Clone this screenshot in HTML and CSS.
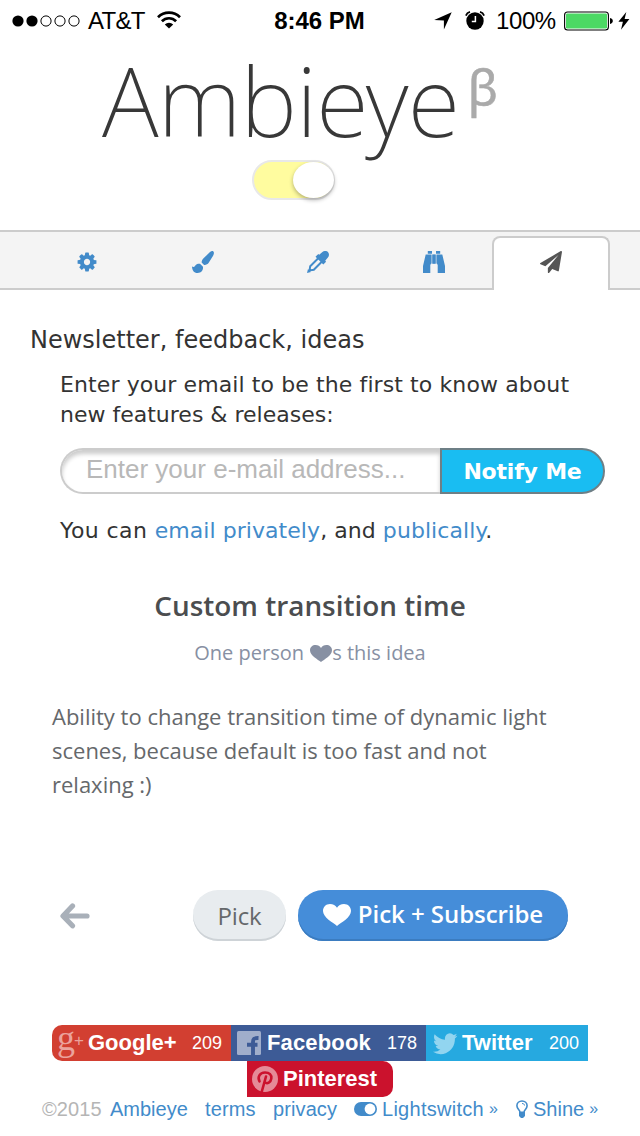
FILE: index.html
```html
<!DOCTYPE html>
<html lang="en">
<head>
<meta charset="utf-8">
<title>Ambieye</title>
<link rel="stylesheet" href="styles.css">
</head>
<body>
<div class="status">
  <div class="status-left">
    <svg class="dots" width="68" height="12" viewBox="0 0 68 12"><circle cx="6" cy="6" r="5.6"/><circle cx="20" cy="6" r="5.6"/><g fill="none" stroke="#000" stroke-width="1"><circle cx="34" cy="6" r="5.1"/><circle cx="48" cy="6" r="5.1"/><circle cx="62" cy="6" r="5.1"/></g></svg>
    <span class="carrier">AT&amp;T</span>
    <svg class="wifi" width="24" height="18" viewBox="0 0 24 18"><path d="M1 6.2a15.6 15.6 0 0 1 22 0M4.900 10.2a10 10 0 0 1 14.2 0" fill="none" stroke="#000" stroke-width="2.7"/><path d="M7.8 13.4a6 6 0 0 1 8.4 0L12 17.6z"/></svg>
  </div>
  <span class="clock">8:46 PM</span>
  <div class="status-right">
    <svg class="locate" width="18" height="18" viewBox="0 0 18 18"><path d="M17.7.2 9.9 17.6V8.4L.2 8.1z"/></svg>
    <svg class="alarm" width="20" height="19" viewBox="0 0 20 19"><circle cx="10" cy="10" r="8.7"/><path d="M.9 4.6A6 6 0 0 1 5 .9M15 .9a6 6 0 0 1 4.1 3.7" fill="none" stroke="#000" stroke-width="1.8"/><path d="M10.400 5v5.600H6.800" fill="none" stroke="#fff" stroke-width="1.5"/></svg>
    <span class="percent">100%</span>
    <svg class="battery" width="49" height="20" viewBox="0 0 49 20"><rect x=".6" y="1" width="43.8" height="18" rx="3" fill="#fff" stroke="#000" stroke-width="1.1"/><rect x="2" y="2.4" width="41" height="15.2" rx="1.4" fill="#4cd964"/><path d="M46 7c2 .4 2.800 1.600 2.800 3s-.8 2.600-2.800 3z"/></svg>
    <svg class="bolt" width="12" height="18" viewBox="0 0 12 18"><path d="M8.300 0 .4 9.800h4.500L3 17.800 11.400 7H6.600z"/></svg>
  </div>
</div>

<header class="header">
  <svg class="logo" width="640" height="119" viewBox="0 0 640 119">
    <text class="logo-name" x="102" y="96" textLength="358">Ambieye</text>
    <text class="logo-beta" x="467.500" y="65">β</text>
  </svg>
  <div class="switch"><span class="knob"></span></div>
</header>

<nav class="tabs">
  <a class="tab"><svg width="22" height="22" viewBox="0 0 1792 1792"><path d="M1152 896q0-106-75-181t-181-75-181 75-75 181 75 181 181 75 181-75 75-181zm512-109v222q0 12-8 23t-20 13l-185 28q-19 54-39 91 35 50 107 138 10 12 10 25t-9 23q-27 37-99 108t-94 71q-12 0-26-9l-138-108q-44 23-91 38-16 136-29 186-7 28-36 28h-222q-14 0-24.500-8.500t-11.500-21.500l-28-184q-49-16-90-37l-141 107q-10 9-25 9-14 0-25-11-126-114-165-168-7-10-7-23 0-12 8-23 15-21 51-66.500t54-70.500q-27-50-41-99l-183-27q-13-2-21-12.500t-8-23.500v-222q0-12 8-23t19-13l186-28q14-46 39-92-40-57-107-138-10-12-10-24 0-10 9-23 26-36 98.500-107.500t94.500-71.500q13 0 26 10l138 107q44-23 91-38 16-136 29-186 7-28 36-28h222q14 0 24.500 8.500t11.500 21.500l28 184q49 16 90 37l142-107q9-9 24-9 13 0 25 10 129 119 165 170 7 8 7 22 0 12-8 23-15 21-51 66.500t-54 70.500q26 50 41 98l183 28q13 2 21 12.500t8 23.500z"/></svg></a>
  <a class="tab"><svg width="22" height="22" viewBox="0 0 22 22"><path d="M21.400.5c.9.900.6 2.500-.3 4.200L16.700 11.800c-1.100 1.500-2.600 2.300-4.600 2.100L9.600 11.500c.1-1.900.8-3.100 2.200-4.500L18 1.100C19.400-.1 20.700-.2 21.400.5z"/><path d="M0 15.500c1.300.8 2.200.6 3-.5 1-1.700 2.500-2.300 5-2.200l3 3C11.400 19.500 9.200 22 5.600 22 1.800 22 .3 19.500 0 15.500z"/></svg></a>
  <a class="tab"><svg width="22" height="22" viewBox="0 0 22 22"><path d="M12.200 3.700 15.400 1c2-1.500 4.200-1.300 5.500 0 1.400 1.500 1.500 3.700 0 5.600L18.200 9.800l.9 1-2.800 2.800L8.500 5.700l2.800-2.800z"/><path d="M11.500 7 3.200 15.200 2.600 19.400l4.200-.6L15 10.500" fill="none" stroke="currentColor" stroke-width="2"/><path d="m0 22 1-4 3 3z"/></svg></a>
  <a class="tab"><svg width="22" height="22" viewBox="0 0 22 22"><path d="M4.800 0h4.200v2.800H4.800zM13 0h4.200v2.800H13zM2.700 3.600h5.400V12.500L7.300 14v8H0v-7zM19.300 3.600h-5.400V12.500l.8 1.500v8H22v-7zM9.500 3.600h3v9.200h-3z"/><path d="M8.100 3.600h5.800v9H8.100z" opacity=".6"/></svg></a>
  <a class="tab tab-active"><svg width="22" height="22" viewBox="0 0 1792 1792"><path d="M1764 11q33 24 27 64l-256 1536q-5 29-32 45-14 8-31 8-11 0-24-5l-453-185-242 295q-18 23-49 23-13 0-22-4-19-7-30.500-23.500t-11.500-36.500v-349l864-1059-1069 925-395-162q-37-14-40-55-2-40 32-59l1664-960q15-9 32-9 20 0 36 11z"/></svg></a>
</nav>

<main>
  <h2 class="section-title">Newsletter, feedback, ideas</h2>
  <p class="lead"><span class="lead-first">Enter your email to be the first to know about</span><br>new features &amp; releases:</p>
  <form class="signup">
    <input class="email" type="text" placeholder="Enter your e-mail address...">
    <button class="notify" type="button">Notify Me</button>
  </form>
  <p class="contact"><span class="contact-start">You can </span><a>email privately</a>, and <a>publically</a>.</p>

  <section class="idea">
    <h3 class="idea-title">Custom transition time</h3>
    <p class="idea-likes">One person <svg class="heart-small" width="22" height="17" viewBox="0 0 22 17"><path d="M11 17C8 14.500 0 10.500 0 5.200 0 2 2.500 0 5.600 0 8 0 10 1 11 3 12 1 14 0 16.400 0 19.500 0 22 2 22 5.200 22 10.500 14 14.500 11 17z"/></svg>s this idea</p>
    <p class="idea-text">Ability to change transition time of dynamic light<br>scenes, because default is too fast and not<br>relaxing :)</p>
    <div class="actions">
      <svg class="back" width="30" height="26" viewBox="0 0 30 26"><path d="M12.500 3 3 13l9.500 9.800M4 13h23" fill="none" stroke="#a9b0b9" stroke-width="5.200" stroke-linecap="round" stroke-linejoin="round"/></svg>
      <span class="btn pick">Pick</span>
      <span class="btn subscribe"><svg width="28" height="22" viewBox="0 0 28 22"><path d="M14 22C10 18.500 0 13.500 0 7 0 2.800 3 0 7 0c3 0 5.800 1.300 7 3.800C15.200 1.300 18 0 21 0c4 0 7 2.800 7 7 0 6.500-10 11.500-14 15z"/></svg>Pick + Subscribe</span>
    </div>
  </section>
</main>

<div class="share">
  <div class="share-row">
    <a class="share-btn google"><span class="share-icon g-icon">g<span class="g-plus">+</span></span><b>Google+</b><i>209</i></a>
    <a class="share-btn facebook"><svg class="share-icon" width="36" height="36" viewBox="0 0 36 36"><rect x="6" y="6" width="24" height="24" rx="1.500" fill="#a0aecb"/><path d="M22 30V17c0-3 1-4.200 5.500-4M16 19.800h10.500" fill="none" stroke="#3d5b96" stroke-width="3.900"/></svg><b>Facebook</b><i>178</i></a>
    <a class="share-btn twitter"><svg class="share-icon" width="36" height="36" viewBox="0 0 36 36"><path transform="translate(5.300 4.100) scale(.0155 .0163)" fill="#92d5f0" d="M1684 408q-67 98-162 167 1 14 1 42 0 130-38 259.500t-115.500 248.500-184.500 210.500-258 146-323 54.500q-271 0-496-145 35 4 78 4 225 0 401-138-105-2-188-64.500t-114-159.500q33 5 61 5 43 0 85-11-112-23-185.500-111.500t-73.500-205.500v-4q68 38 146 41-66-44-105-115t-39-154q0-88 44-163 121 149 294.500 238.500t371.500 99.500q-8-38-8-74 0-134 94.500-228.500t228.500-94.500q140 0 236 102 109-21 205-78-37 115-142 178 93-10 186-50z"/></svg><b>Twitter</b><i>200</i></a>
  </div>
  <a class="share-btn pinterest"><svg class="share-icon" width="36" height="36" viewBox="0 0 36 36"><circle cx="18" cy="18" r="13" fill="#e58a97"/><path d="M12.500 20.300c-2.300-4 .2-8.800 5.500-8.800 4.500 0 6.800 2.500 6.300 6-.6 4-4 5.800-6.600 3.800M19 15.500 14.800 30.500" fill="none" stroke="#cb122d" stroke-width="2.600" stroke-linecap="round"/></svg><b>Pinterest</b></a>
</div>

<footer class="footer">
  <span class="copy">©2015</span><a class="f-home">Ambieye</a><a class="f-terms">terms</a><a class="f-privacy">privacy</a><a class="f-light"><svg width="23" height="14" viewBox="0 0 23 14"><rect width="23" height="14" rx="7"/><circle cx="16" cy="7" r="5.400" fill="#fff"/></svg><span class="f-label">Lightswitch</span><small>»</small></a><a class="f-shine"><svg width="12" height="18" viewBox="0 0 12 18"><path d="M4 12.300C4 9.800.9 9 .9 5.800.9 3 3.200 1 6 1s5.100 2 5.100 4.800C11.100 9 8 9.800 8 12.300z" fill="none" stroke="currentColor" stroke-width="1.600"/><path d="M6 3.500c1.500 0 2.500.7 2.500 2" fill="none" stroke="currentColor"/><path d="M3 12h6v4l-2 2H5l-2-2z"/></svg>Shine<small>»</small></a>
</footer>
</body>
</html>
```
FILE: styles.css
```css
* { box-sizing: border-box; }
body { margin: 0; width: 640px; height: 1136px; overflow: hidden; background: #fff; color: #333; font-family: "Liberation Sans", Arial, sans-serif; }
h2, h3, p { margin: 0; font-weight: 400; }
svg { display: block; flex: none; fill: currentColor; }
a { color: #428bca; }

.status { display: flex; align-items: center; justify-content: space-between; height: 41px; padding: 0 10px 0 12px; color: #000; font-size: 24px; line-height: 41px; white-space: nowrap; }
.status-left, .status-right { display: flex; align-items: center; }
.status-left { width: 262px; }
.status-right { width: 265px; justify-content: flex-end; }
.carrier { margin-left: 8px; letter-spacing: -.7px; width: 57px; }
.wifi { margin-left: 12px; margin-top: -1px; }
.clock { font-weight: 700; font-size: 24px; }
.alarm { margin-left: 13px; margin-top: -1px; }
.percent { margin-left: 11px; width: 60px; letter-spacing: -.4px; }
.battery { margin-left: 8px; }
.bolt { margin-left: 5px; }

.header { height: 189px; display: flex; flex-direction: column; align-items: center; }
.logo { overflow: visible; }
.logo-name { font: 200 96px "Noto Sans", sans-serif; fill: #383838; }
.logo-beta { font: 400 50px "Noto Sans", sans-serif; fill: #aaa; stroke: #aaa; stroke-width: .5px; }
.switch { display: flex; justify-content: flex-end; width: 83px; height: 40px; margin-left: -53px; border: 2px solid #e8e8e8; border-radius: 20px; background: #fffc9f; }
.knob { width: 41px; height: 36px; margin-right: -1px; border-radius: 50%; background: #fff; box-shadow: 0 2px 4px rgba(0,0,0,.3); }

.tabs { display: flex; align-items: flex-end; height: 60px; padding-left: 29px; background: #f4f4f4; border-top: 2px solid #ccc; border-bottom: 2px solid #ccc; }
.tab { display: flex; align-items: center; justify-content: center; width: 115.7px; height: 52px; }
.tab:first-child { padding-left: 1px; }
.tab-active { width: 118px; height: 54px; padding-bottom: 4px; margin-bottom: -2px; border: 2px solid #ccc; border-bottom: 0; border-radius: 8px 8px 0 0; background: #fff; color: #555; }

.section-title { margin: 35px 0 0 30px; font: 24px/30px "DejaVu Sans", Verdana, sans-serif; }
.lead, .contact { margin-left: 60px; font: 22px/30px "DejaVu Sans", Verdana, sans-serif; white-space: nowrap; }
.lead { margin-top: 15px; }
.lead-first { letter-spacing: .1px; }
.signup { display: flex; width: 545px; height: 46px; margin: 18px 0 0 60px; }
.email { width: 380px; height: 46px; padding: 0 0 4px 24px; border: 2px solid #ccc; border-right: 0; border-radius: 23px 0 0 23px; outline: 0; background: #fff; box-shadow: inset 0 4px 4px rgba(0,0,0,.2); font: 26px "Liberation Sans", Arial, sans-serif; }
.email::placeholder { color: #b8b8b8; opacity: 1; }
.notify { width: 165px; height: 46px; padding: 0; border: 2px solid #6e7f86; border-radius: 0 23px 23px 0; background: #19bdf2; color: #fff; font: 700 22px "DejaVu Sans", Verdana, sans-serif; letter-spacing: -.2px; }
.contact { margin-top: 22px; letter-spacing: .06px; }
.contact-start { letter-spacing: .4px; }

.idea { font-family: "Open Sans", sans-serif; white-space: nowrap; }
.idea-title { margin: 40px 20px 0 0; text-align: center; font-size: 27.9px; line-height: 38px; font-weight: 600; color: #4b4d4f; }
.idea-likes { display: flex; justify-content: center; align-items: center; margin: 15px 20px 0 0; font-size: 20px; line-height: 28px; color: #8790a3; white-space: pre; }
.heart-small { margin: 0 0 0 1px; }
.idea-text { margin: 32px 0 0 52px; font-size: 22px; line-height: 34px; color: #65686b; }
.actions { display: flex; align-items: center; height: 51px; margin: 89px 0 0 60px; }
.btn { display: flex; align-items: center; justify-content: center; height: 51px; border-radius: 25px; font-size: 24px; }
.pick { width: 93px; margin-left: 103px; background: #e8ecef; color: #65686b; box-shadow: inset 0 -2px #ced3d7; letter-spacing: -.2px; }
.subscribe { width: 270px; margin-left: 12px; padding-bottom: 4px; background: #458dd9; color: #fff; font-weight: 600; box-shadow: inset 0 -2px #3b7cc0; letter-spacing: -.05px; }
.subscribe svg { margin: 3px 7px 0 0; }

.share { display: flex; flex-direction: column; align-items: center; margin-top: 84px; }
.share-row { display: flex; }
.share-btn { display: flex; align-items: center; height: 36px; color: #fff; font-size: 22px; line-height: 36px; padding-right: 9px; }
.share-icon { width: 36px; height: 36px; flex: none; }
.share-btn i { margin-left: auto; font-style: normal; font-size: 18px; }
.google { width: 179px; background: #d23f31; border-radius: 10px 0 0 10px; }
.facebook { width: 195px; background: #3d5b96; }
.facebook b { letter-spacing: .15px; }
.twitter { width: 162px; background: #26a9e0; }
.pinterest { width: 146px; background: #cb122d; border-radius: 0 10px 10px 0; }
.g-icon { display: flex; padding-left: 5px; color: #eba39c; font: 36px/27px "Liberation Serif", serif; }
.g-plus { margin: 4px 0 0 -1px; font: 17px/24px "Liberation Sans", sans-serif; }

.footer { display: flex; margin-left: 42px; font-size: 20px; line-height: 24px; white-space: pre; color: #b5b5b5; }
.footer a { display: flex; align-items: center; }
.copy { width: 68px; letter-spacing: .1px; }
.f-home { width: 95px; }
.f-terms { width: 68px; letter-spacing: .1px; }
.f-privacy { width: 81px; letter-spacing: .1px; }
.f-light { width: 162px; }
.f-label { letter-spacing: .27px; }
.f-light svg, .f-shine svg { margin-right: 5px; }
.footer small { margin-left: 5px; font-size: 16px; }
```
